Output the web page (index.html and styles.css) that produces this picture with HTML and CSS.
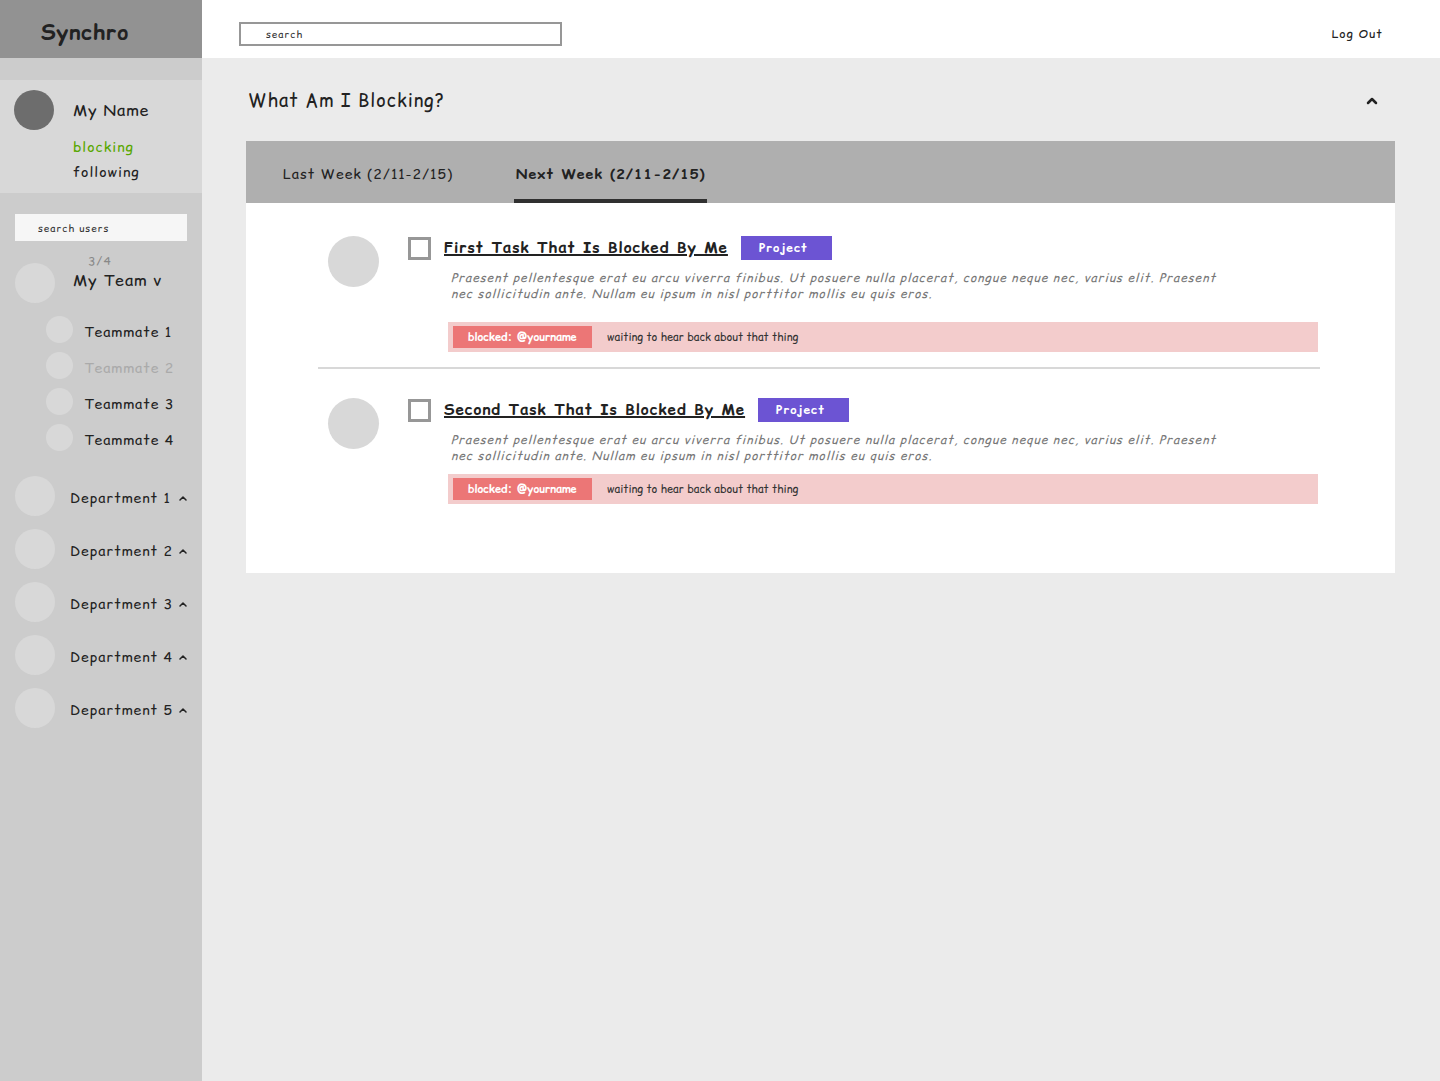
FILE: index.html
```html
<!DOCTYPE html>
<html lang="en">
<head>
<meta charset="utf-8">
<meta name="viewport" content="width=device-width, initial-scale=1">
<title>Synchro</title>
<link rel="stylesheet" href="styles.css">
</head>
<body>
<div class="app">
  <aside class="sidebar">
    <div class="brand">Synchro</div>

    <section class="profile">
      <span class="avatar avatar-me"></span>
      <div class="profile-info">
        <span class="profile-name">My Name</span>
        <a class="profile-link is-active" href="#blocking">blocking</a>
        <a class="profile-link" href="#following">following</a>
      </div>
    </section>

    <input class="user-search" type="text" placeholder="search users" aria-label="Search users">

    <section class="team">
      <div class="team-head">
        <span class="avatar"></span>
        <div class="team-label">
          <span class="team-count">3/4</span>
          <button class="team-toggle" type="button">My Team v</button>
        </div>
      </div>
      <ul class="teammates">
        <li><span class="avatar avatar-small"></span><a href="#t1">Teammate 1</a></li>
        <li class="is-away"><span class="avatar avatar-small"></span><a href="#t2">Teammate 2</a></li>
        <li><span class="avatar avatar-small"></span><a href="#t3">Teammate 3</a></li>
        <li><span class="avatar avatar-small"></span><a href="#t4">Teammate 4</a></li>
      </ul>
    </section>

    <ul class="departments">
      <li><span class="avatar"></span><button type="button">Department 1 <svg class="caret" viewBox="0 0 8 6" aria-hidden="true"><path d="M1 5 4 2 7 5"/></svg></button></li>
      <li><span class="avatar"></span><button type="button">Department 2 <svg class="caret" viewBox="0 0 8 6" aria-hidden="true"><path d="M1 5 4 2 7 5"/></svg></button></li>
      <li><span class="avatar"></span><button type="button">Department 3 <svg class="caret" viewBox="0 0 8 6" aria-hidden="true"><path d="M1 5 4 2 7 5"/></svg></button></li>
      <li><span class="avatar"></span><button type="button">Department 4 <svg class="caret" viewBox="0 0 8 6" aria-hidden="true"><path d="M1 5 4 2 7 5"/></svg></button></li>
      <li><span class="avatar"></span><button type="button">Department 5 <svg class="caret" viewBox="0 0 8 6" aria-hidden="true"><path d="M1 5 4 2 7 5"/></svg></button></li>
    </ul>
  </aside>

  <div class="content">
    <header class="topbar">
      <input class="search" type="text" placeholder="search" aria-label="Search">
      <a class="logout" href="#logout">Log Out</a>
    </header>

    <main class="main">
      <div class="section-head">
        <h1>What Am I Blocking?</h1>
        <button class="collapse" type="button" aria-label="Collapse section">
          <svg viewBox="0 0 12 8" aria-hidden="true"><path d="M2 6 6 2 10 6"/></svg>
        </button>
      </div>

      <section class="panel">
        <div class="tabs">
          <button class="tab" type="button">Last Week (2/11-2/15)</button>
          <button class="tab is-current" type="button">Next Week (2/11-2/15)</button>
        </div>

        <ul class="tasks">
          <li class="task">
            <span class="avatar avatar-large"></span>
            <div class="task-body">
              <div class="task-head">
                <input class="check" type="checkbox" aria-label="First Task That Is Blocked By Me">
                <a class="task-title" href="#task1">First Task That Is Blocked By Me</a>
                <span class="tag">Project</span>
              </div>
              <p class="task-text">Praesent pellentesque erat eu arcu viverra finibus. Ut posuere nulla placerat, congue neque nec, varius elit. Praesent nec sollicitudin ante. Nullam eu ipsum in nisl porttitor mollis eu quis eros.</p>
              <div class="blocker">
                <span class="blocker-who">blocked: @yourname</span>
                <span>waiting to hear back about that thing</span>
              </div>
            </div>
          </li>
          <li class="task is-compact">
            <span class="avatar avatar-large"></span>
            <div class="task-body">
              <div class="task-head">
                <input class="check" type="checkbox" aria-label="Second Task That Is Blocked By Me">
                <a class="task-title" href="#task2">Second Task That Is Blocked By Me</a>
                <span class="tag">Project</span>
              </div>
              <p class="task-text">Praesent pellentesque erat eu arcu viverra finibus. Ut posuere nulla placerat, congue neque nec, varius elit. Praesent nec sollicitudin ante. Nullam eu ipsum in nisl porttitor mollis eu quis eros.</p>
              <div class="blocker">
                <span class="blocker-who">blocked: @yourname</span>
                <span>waiting to hear back about that thing</span>
              </div>
            </div>
          </li>
        </ul>
      </section>
    </main>
  </div>
</div>
</body>
</html>
```
FILE: styles.css
```css
* {
  box-sizing: border-box;
}

body {
  margin: 0;
  background: #ebebeb;
  color: #222;
  font-family: "Comic Relief", "Comic Neue", "Open Sans", sans-serif;
  font-size: 14px;
  line-height: 20px;
  letter-spacing: 1px;
}

h1,
p,
ul {
  margin: 0;
  padding: 0;
}

ul {
  list-style: none;
}

a {
  color: inherit;
  text-decoration: none;
}

button {
  padding: 0;
  border: 0;
  background: none;
  color: inherit;
  font: inherit;
  letter-spacing: inherit;
  text-align: left;
  cursor: pointer;
}

input {
  margin: 0;
  color: inherit;
  font: inherit;
  letter-spacing: inherit;
}

input::placeholder {
  color: #333;
  opacity: 1;
}

svg {
  display: block;
  fill: none;
  stroke: #222;
  stroke-linecap: round;
  stroke-linejoin: round;
}

.app {
  display: grid;
  grid-template-columns: 202px 1fr;
  min-height: 100vh;
}

.avatar {
  flex: none;
  width: 40px;
  height: 40px;
  border-radius: 50%;
  background: #d8d8d8;
}

.avatar-me {
  background: #6d6d6d;
}

.avatar-small {
  width: 27px;
  height: 27px;
}

.avatar-large {
  width: 51px;
  height: 51px;
}

/* Sidebar */

.sidebar {
  background: #ccc;
}

.brand {
  height: 58px;
  padding: 19px 0 0 41px;
  background: #929292;
  font-size: 21px;
  font-weight: 700;
  line-height: 28px;
}

.profile {
  display: flex;
  gap: 19px;
  margin-top: 22px;
  padding: 10px 14px 11px;
  background: #d8d8d8;
}

.profile-info {
  display: flex;
  flex-direction: column;
}

.profile-name {
  padding-bottom: 7px;
  font-size: 16px;
  line-height: 40px;
}

.profile-link {
  padding-bottom: 5px;
}

.profile-link:last-child {
  padding-bottom: 0;
}

.profile-link.is-active {
  color: #58a700;
}

.user-search {
  display: block;
  width: 172px;
  height: 27px;
  margin: 21px 0 0 15px;
  padding: 0 23px;
  border: 0;
  background: #f6f6f6;
  font-size: 10px;
}

.team {
  margin-top: 12px;
}

.team-head {
  display: flex;
  align-items: flex-end;
  gap: 18px;
  padding-left: 15px;
}

.team-label {
  display: flex;
  flex-direction: column;
  padding-bottom: 12px;
}

.team-count {
  padding-left: 15px;
  color: #888;
  font-size: 12px;
  line-height: 16px;
}

.team-toggle {
  font-size: 16px;
  line-height: 22px;
}

.teammates {
  display: flex;
  flex-direction: column;
  gap: 9px;
  padding: 13px 0 0 46px;
}

.teammates li {
  display: flex;
  align-items: center;
  gap: 11px;
}

.teammates a,
.departments button {
  padding-top: 4px;
}

.is-away {
  color: #aaa;
}

.departments {
  display: flex;
  flex-direction: column;
  gap: 13px;
  padding: 25px 15px 24px;
}

.departments li {
  display: flex;
  align-items: center;
  gap: 15px;
}

.departments button {
  display: flex;
  flex: 1;
  align-items: center;
  justify-content: space-between;
  white-space: nowrap;
}

.caret {
  width: 8px;
  height: 6px;
  stroke-width: 1.5;
}

/* Top bar */

.topbar {
  display: flex;
  align-items: center;
  justify-content: space-between;
  height: 58px;
  padding: 10px 57px 0 37px;
  background: #fff;
}

.search {
  width: 323px;
  height: 24px;
  padding: 0 25px;
  border: 2px solid #979797;
  background: #fff;
  font-size: 10px;
}

.logout {
  font-size: 12px;
}

/* Blocking panel */

.main {
  padding: 0 45px 45px 44px;
}

.section-head {
  display: flex;
  align-items: center;
  justify-content: space-between;
  height: 83px;
  padding: 3px 17px 0 2px;
}

.section-head h1 {
  font-size: 18px;
  font-weight: 400;
  line-height: 28px;
}

.collapse svg {
  width: 12px;
  height: 8px;
  stroke-width: 2.5;
}

.panel {
  padding-bottom: 69px;
  background: #fff;
}

.tabs {
  display: flex;
  gap: 59px;
  height: 62px;
  padding-left: 35px;
  background: #afafaf;
}

.tab {
  padding: 8px 2px 0;
  border-bottom: 4px solid transparent;
}

.tab.is-current {
  border-color: #303030;
  font-weight: 700;
}

.tasks {
  padding: 4px 75px 0 72px;
}

.task {
  display: flex;
  gap: 29px;
  padding: 29px 2px 15px 10px;
}

.task + .task {
  border-top: 2px solid #d8d8d8;
}

.task.is-compact {
  padding-bottom: 0;
}

.task-body {
  flex: 1;
  min-width: 0;
}

.task-head {
  display: flex;
  align-items: center;
  gap: 13px;
  height: 24px;
}

.check {
  width: 23px;
  height: 23px;
  border: 3px solid #979797;
  background: #fff;
  appearance: none;
}

.check:checked {
  background: #979797;
}

.task-title {
  font-size: 15px;
  font-weight: 700;
  text-decoration: underline;
  text-decoration-thickness: 2px;
}

.tag {
  width: 91px;
  padding-left: 18px;
  background: #6c54d3;
  color: #fff;
  font-size: 12px;
  font-weight: 700;
  line-height: 24px;
}

.task-text {
  max-width: 784px;
  margin: 10px 0 20px 43px;
  color: #777;
  font-size: 12px;
  font-style: italic;
  line-height: 16px;
}

.is-compact .task-text {
  margin-bottom: 10px;
}

.blocker {
  display: flex;
  gap: 15px;
  margin-left: 40px;
  padding: 4px 5px;
  background: #f3cccc;
  color: #333;
  font-size: 11px;
  line-height: 22px;
  letter-spacing: normal;
}

.blocker-who {
  width: 139px;
  padding-left: 15px;
  background: #ec7676;
  color: #fff;
  font-weight: 700;
}
```
